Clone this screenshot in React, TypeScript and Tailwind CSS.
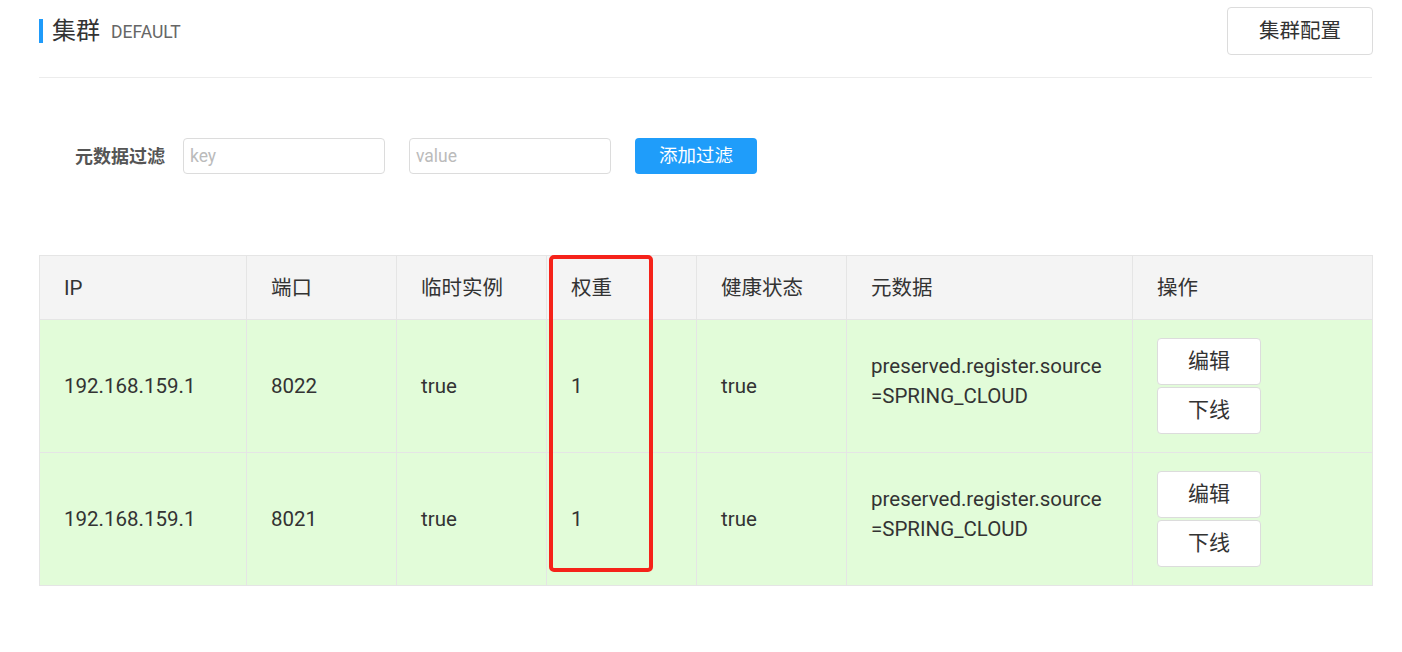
import React from "react";

const font = { fontFamily: 'Roboto, "Noto Sans CJK SC", sans-serif' };

const rows = [
  { ip: "192.168.159.1", port: "8022" },
  { ip: "192.168.159.1", port: "8021" },
];

export default function App() {
  return (
    <div className="w-[1402px] h-[652px] bg-white text-[#333]" style={font}>
      <div className="pl-[39px] pr-[29px]">
        <div className="flex items-center justify-between h-[62px]">
          <div className="flex items-center">
            <div className="w-[4px] h-[24px] bg-[#1f9bfa]" />
            <span className="ml-[9px] text-[24px] text-[#333]">集群</span>
            <span className="ml-[11px] text-[17.5px] text-[#666] mt-[2px]">DEFAULT</span>
          </div>
          <button className="w-[146px] h-[48px] border border-[#dcdcdc] rounded-[4px] text-[20.5px] text-[#333] bg-white">
            集群配置
          </button>
        </div>
        <div className="mt-[15px] mr-[1px] h-px bg-[#ececec]" />
        <div className="flex items-center mt-[60px] pl-[36px]">
          <span className="text-[18px] font-bold text-[#555] w-[108px]">元数据过滤</span>
          <div className="w-[202px] h-[36px] border border-[#dcdcdc] rounded-[4px] flex items-center px-[6px] text-[17.5px] text-[#bbb]">key</div>
          <div className="ml-[24px] w-[202px] h-[36px] border border-[#dcdcdc] rounded-[4px] flex items-center px-[6px] text-[17.5px] text-[#bbb]">value</div>
          <button className="ml-[24px] w-[122px] h-[36px] rounded-[4px] bg-[#1f9dfa] text-white text-[18.5px] pt-[1px]">添加过滤</button>
        </div>
        <div className="relative mt-[81px] w-[1334px]">
          <table className="w-[1334px] border-collapse table-fixed text-[20.5px] text-[#333]">
            <colgroup>
              <col className="w-[207px]" />
              <col className="w-[150px]" />
              <col className="w-[150px]" />
              <col className="w-[150px]" />
              <col className="w-[150px]" />
              <col className="w-[286px]" />
              <col className="w-[240px]" />
            </colgroup>
            <thead>
              <tr className="bg-[#f4f4f4] h-[64px]">
                {["IP", "端口", "临时实例", "权重", "健康状态", "元数据", "操作"].map((h) => (
                  <th key={h} className="border border-[#e5e5e5] text-left font-normal pl-[24px] pt-[2px]">
                    {h}
                  </th>
                ))}
              </tr>
            </thead>
            <tbody>
              {rows.map((r, i) => (
                <tr key={i} className="bg-[#e2fcd9] h-[133px]">
                  <td className="border border-[#e5e5e5] pl-[24px]">{r.ip}</td>
                  <td className="border border-[#e5e5e5] pl-[24px]">{r.port}</td>
                  <td className="border border-[#e5e5e5] pl-[24px]">true</td>
                  <td className="border border-[#e5e5e5] pl-[24px]">1</td>
                  <td className="border border-[#e5e5e5] pl-[24px]">true</td>
                  <td className="border border-[#e5e5e5] pl-[24px] pb-[10px] leading-[30px]">
                    preserved.register.source
                    <br />
                    =SPRING_CLOUD
                  </td>
                  <td className="border border-[#e5e5e5] pl-[24px]">
                    <div className="flex flex-col gap-[2px]">
                      <button className="w-[104px] h-[47px] bg-white border border-[#dcdcdc] rounded-[4px] text-[21px]">编辑</button>
                      <button className="w-[104px] h-[47px] bg-white border border-[#dcdcdc] rounded-[4px] text-[21px]">下线</button>
                    </div>
                  </td>
                </tr>
              ))}
            </tbody>
          </table>
          <div className="absolute left-[510px] top-0 w-[104px] h-[317px] border-[4px] border-[#f5221a] rounded-[5px] pointer-events-none" />
        </div>
      </div>
    </div>
  );
}
